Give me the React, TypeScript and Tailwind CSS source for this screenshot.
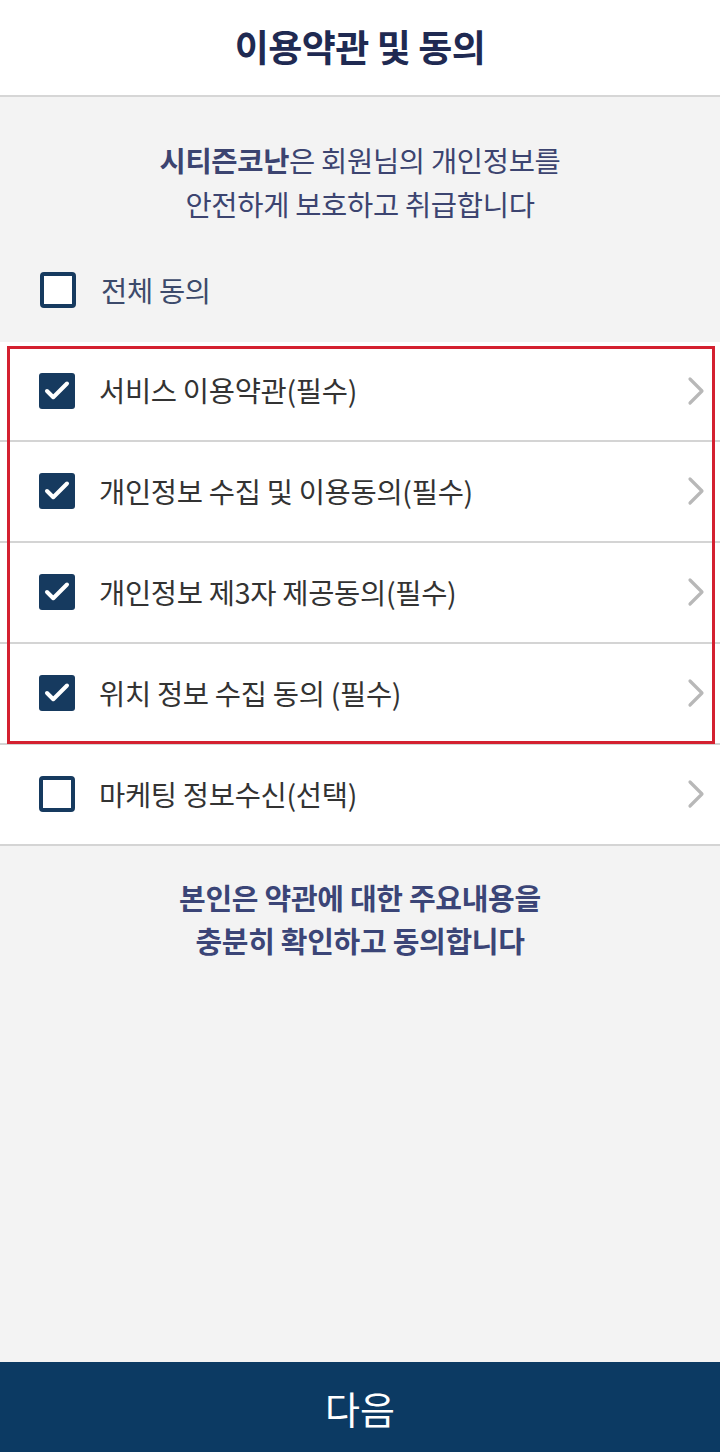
import { Check } from "lucide-react"

const terms = [
  { label: "서비스 이용약관(필수)", checked: true },
  { label: "개인정보 수집 및 이용동의(필수)", checked: true },
  { label: "개인정보 제3자 제공동의(필수)", checked: true },
  { label: "위치 정보 수집 동의 (필수)", checked: true },
  { label: "마케팅 정보수신(선택)", checked: false },
]

function Box({ checked }: { checked: boolean }) {
  if (checked) {
    return (
      <span className="flex h-[36px] w-[36px] shrink-0 items-center justify-center rounded-[3px] bg-[#163a5f]">
        <Check className="h-[30px] w-[30px] text-white" strokeWidth={3.2} />
      </span>
    )
  }
  return <span className="block h-[36px] w-[36px] shrink-0 rounded-[4px] border-[4px] border-[#163a5f] bg-white" />
}

function Chevron() {
  return (
    <svg width="20" height="32" viewBox="0 0 20 32" className="shrink-0">
      <polyline points="4,4 16,16 4,28" fill="none" stroke="#b8b8b8" strokeWidth="3.2" strokeLinecap="round" strokeLinejoin="round" />
    </svg>
  )
}

export default function App() {
  return (
    <div
      className="flex h-[1452px] flex-col bg-[#f3f3f3]"
      style={{ fontFamily: '"Noto Sans CJK KR", "Noto Sans", sans-serif' }}
    >
      <header className="flex h-[97px] shrink-0 items-center justify-center border-b-2 border-[#d6d6d6] bg-white pb-[2px]">
        <h1 className="text-[37px] font-bold tracking-[-0.5px] text-[#1f2a52]">이용약관 및 동의</h1>
      </header>

      <p className="mt-[41px] text-center text-[28.5px] leading-[44px] tracking-[-0.3px] text-[#3c4470]">
        <span className="font-bold">시티즌코난</span>은 회원님의 개인정보를
        <br />
        안전하게 보호하고 취급합니다
      </p>

      <div className="mt-[43px] flex items-center gap-[25px] pl-[40px]">
        <Box checked={false} />
        <span className="text-[28.5px] tracking-[-0.3px] text-[#3c4a6b]">전체 동의</span>
      </div>

      <div className="relative mt-[30px] bg-white">
        {terms.map((t, i) => (
          <div
            key={t.label}
            className={`flex items-center border-[#d4d4d4] pl-[39px] pr-[14px] ${i === 0 ? "h-[98px]" : "h-[101px] border-t-2"}`}
          >
            <Box checked={t.checked} />
            <span className="ml-[24px] flex-1 text-[28.5px] tracking-[-0.3px] text-[#333333]">{t.label}</span>
            <Chevron />
          </div>
        ))}
        <div className="border-b-2 border-[#d4d4d4]" />
        <div className="pointer-events-none absolute left-[7px] top-[4px] h-[398px] w-[708px] border-[3px] border-[#d42030]" />
      </div>

      <p className="mt-[30px] text-center text-[29px] font-bold leading-[43px] tracking-[-0.3px] text-[#3b4577]">
        본인은 약관에 대한 주요내용을
        <br />
        충분히 확인하고 동의합니다
      </p>

      <div className="flex-1" />

      <button className="flex h-[90px] shrink-0 items-center justify-center bg-[#0c3a63] text-[38px] text-white">
        다음
      </button>
    </div>
  )
}
